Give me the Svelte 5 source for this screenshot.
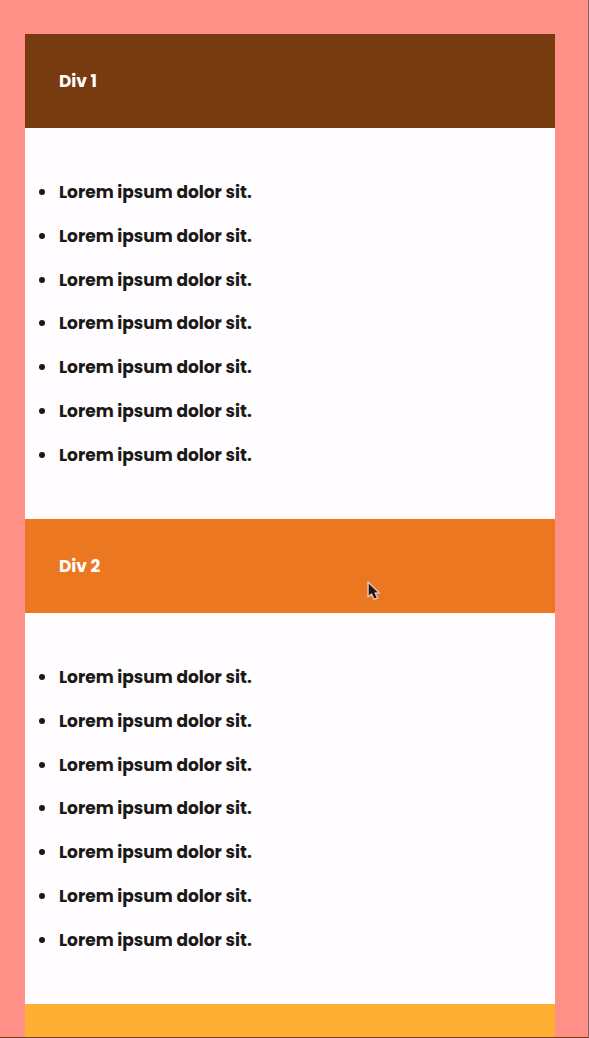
<script>
  const items = Array.from({ length: 7 }, () => 'Lorem ipsum dolor sit.');
  const sections = [
    { title: 'Div 1', tone: 'brown', pointer: false },
    { title: 'Div 2', tone: 'orange', pointer: true }
  ];
</script>

<main class="page">
  {#each sections as section}
    <section>
      <header class={section.tone}>
        <h2>{section.title}</h2>
        {#if section.pointer}
          <svg class="pointer" viewBox="0 0 14 20" width="14" height="20" aria-hidden="true">
            <path d="M1 1V16L4.5 13L7 18.5L10.5 17L8.3 12H12.5Z" fill="#1b1714" stroke="#e2bdb5" stroke-width="1.6" stroke-linejoin="round" />
          </svg>
        {/if}
      </header>
      <ul>
        {#each items as item}
          <li>{item}</li>
        {/each}
      </ul>
    </section>
  {/each}
  <section class="amber"></section>
</main>

<style>
  .page {
    box-sizing: border-box;
    display: flex;
    flex-direction: column;
    min-height: 100vh;
    padding: 34px 33px 0 25px;
    background: #ff9088;
    border-right: 1px solid #806660;
    border-bottom: 1px solid #74380f;
    font-family: Poppins, Inter, sans-serif;
    font-size: 17px;
    font-weight: 700;
    line-height: 26px;
  }

  header {
    position: relative;
    padding: 34px;
    color: #fffdff;
  }

  h2 {
    margin: 0;
    font: inherit;
  }

  .brown {
    background: #783a0f;
  }

  .orange {
    background: #eb7820;
  }

  .amber {
    flex: 1;
    background: #ffb032;
  }

  ul {
    box-sizing: border-box;
    display: grid;
    grid-auto-rows: 1fr;
    align-items: center;
    min-height: 391px;
    margin: 0;
    padding: 42px 14px;
    list-style: none;
    background: #fffdff;
    color: #1b1918;
  }

  li {
    display: flex;
    align-items: center;
    gap: 14px;
  }

  li::before {
    content: '';
    width: 6px;
    height: 6px;
    border-radius: 50%;
    background: currentColor;
  }

  .pointer {
    position: absolute;
    top: 62px;
    left: 342px;
  }
</style>
